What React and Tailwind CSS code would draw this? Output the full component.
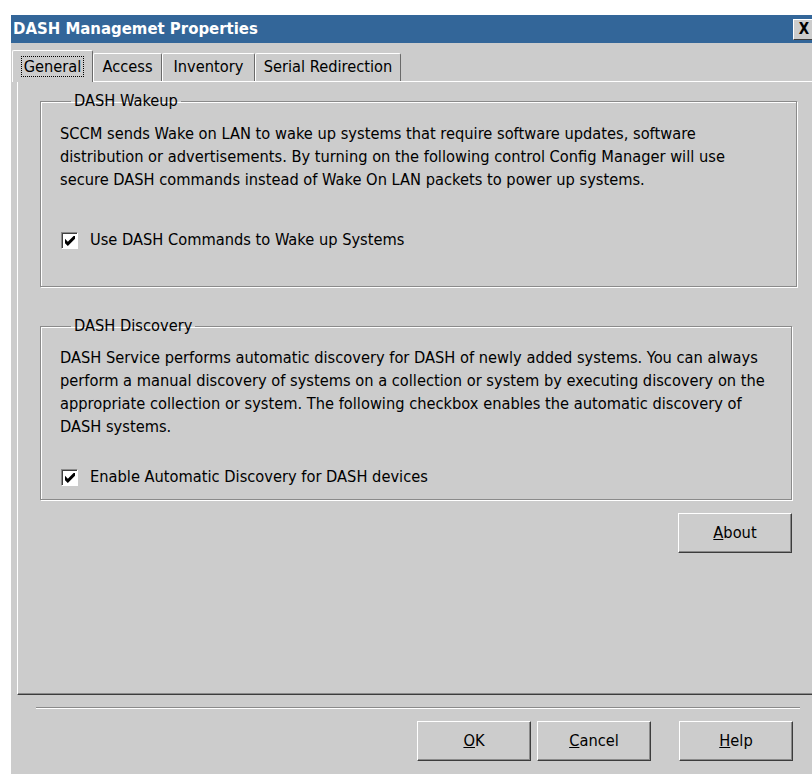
import React from 'react';

// classic 3D button with raised bevel
const Button = ({ children, className = '' }) => (
  <button
    className={`w-[114px] h-[40px] bg-[#cccccc] border border-t-white border-l-white border-r-[#3c3c3c] border-b-[#3c3c3c] shadow-[inset_-1px_-1px_0_#8a8a8a] text-[16.3px] text-black flex items-center justify-center ${className}`}
  >
    {children}
  </button>
);

const CheckBox = ({ label }) => (
  <label className="flex items-center h-[23px]">
    <span className="ml-[1px] w-[17px] h-[17px] bg-white border-t border-l border-t-[#8a8a8a] border-l-[#8a8a8a] border-b border-r border-b-white border-r-white shadow-[inset_1px_1px_0_#404040] flex items-center justify-center">
      <svg viewBox="0 0 7 7" className="w-[10px] h-[10px]">
        <path d="M0 2 L2 4 L6 0 L7 0 L7 2 L2 7 L0 5 Z" fill="#000" />
      </svg>
    </span>
    <span className="ml-[12px]">{label}</span>
  </label>
);

const GroupBox = ({ title, className = '', children }) => (
  <fieldset
    className={`border border-[#8a8a8a] shadow-[inset_1px_1px_0_#fff,1px_1px_0_#fff] pl-[19px] ${className}`}
  >
    <legend className="ml-[11px] px-[3px] leading-[20px]">{title}</legend>
    {children}
  </fieldset>
);

const tabs = [
  { label: 'Access', w: 'w-[69px]' },
  { label: 'Inventory', w: 'w-[93px]' },
  { label: 'Serial Redirection', w: 'w-[146px]' },
];

export default function App() {
  return (
    <div className="w-[812px] h-[774px] bg-white overflow-hidden pt-[14px] font-['DejaVu_Sans_Condensed','DejaVu_Sans',sans-serif] text-[16.3px] text-black">
      <div className="ml-[9px] w-[808px] h-[800px] bg-[#cccccc] border-l-2 border-t border-white flex flex-col">
        {/* title bar */}
        <div className="h-[28px] bg-[#336699] flex items-center pl-[2px]">
          <span className="text-white font-bold text-[16.6px]">DASH Managemet Properties</span>
          <span className="ml-auto mr-[2px] w-[22px] h-[21px] bg-[#cccccc] border border-t-white border-l-white border-r-[#3c3c3c] border-b-[#3c3c3c] flex items-center justify-center font-bold text-[15px]">
            X
          </span>
        </div>

        {/* tab strip */}
        <div className="flex items-end ml-[1px] mt-[7px] relative z-10">
          <div className="w-[81px] h-[32px] -mb-[1px] bg-[#cccccc] border-t border-l border-white border-r border-r-[#6a6a6a] rounded-t-[2px] flex items-center justify-center">
            <span className="border border-dotted border-black px-[2px] leading-[19px]">General</span>
          </div>
          {tabs.map((t) => (
            <div
              key={t.label}
              className={`${t.w} h-[28px] bg-[#cccccc] border-t border-l border-white border-r border-r-[#6a6a6a] rounded-t-[2px] flex items-center justify-center`}
            >
              {t.label}
            </div>
          ))}
        </div>

        {/* tab page */}
        <div className="ml-[6px] h-[614px] border-t border-l border-white border-b border-b-[#3c3c3c] shadow-[inset_0_-1px_0_#8a8a8a] pl-[22px] pr-[24px] pt-[9px] flex flex-col items-start">
          <GroupBox title="DASH Wakeup" className="w-[757px] pt-[11px] pb-[34px]">
            <p className="leading-[23px]">
              SCCM sends Wake on LAN to wake up systems that require software updates, software
              <br />
              distribution or advertisements. By turning on the following control Config Manager will use
              <br />
              secure DASH commands instead of Wake On LAN packets to power up systems.
            </p>
            <div className="mt-[38px]">
              <CheckBox label="Use DASH Commands to Wake up Systems" />
            </div>
          </GroupBox>

          <GroupBox title="DASH Discovery" className="w-[752px] mt-[29px] pt-[10px] pb-[10px]">
            <p className="leading-[23px]">
              DASH Service performs automatic discovery for DASH of newly added systems. You can always
              <br />
              perform a manual discovery of systems on a collection or system by executing discovery on the
              <br />
              appropriate collection or system. The following checkbox enables the automatic discovery of
              <br />
              DASH systems.
            </p>
            <div className="mt-[28px]">
              <CheckBox label="Enable Automatic Discovery for DASH devices" />
            </div>
          </GroupBox>

          <div className="self-stretch flex justify-end pr-[1px] mt-[13px]">
            <Button>
              <span><u>A</u>bout</span>
            </Button>
          </div>
        </div>

        {/* etched separator */}
        <div className="ml-[25px] mt-[12px] w-[764px] h-[2px] border-t border-[#8a8a8a] bg-white" />

        {/* dialog buttons */}
        <div className="flex justify-end pr-[24px] mt-[12px]">
          <Button>
            <span><u>O</u>K</span>
          </Button>
          <Button className="ml-[6px]">
            <span><u>C</u>ancel</span>
          </Button>
          <Button className="ml-[28px]">
            <span><u>H</u>elp</span>
          </Button>
        </div>
      </div>
    </div>
  );
}
